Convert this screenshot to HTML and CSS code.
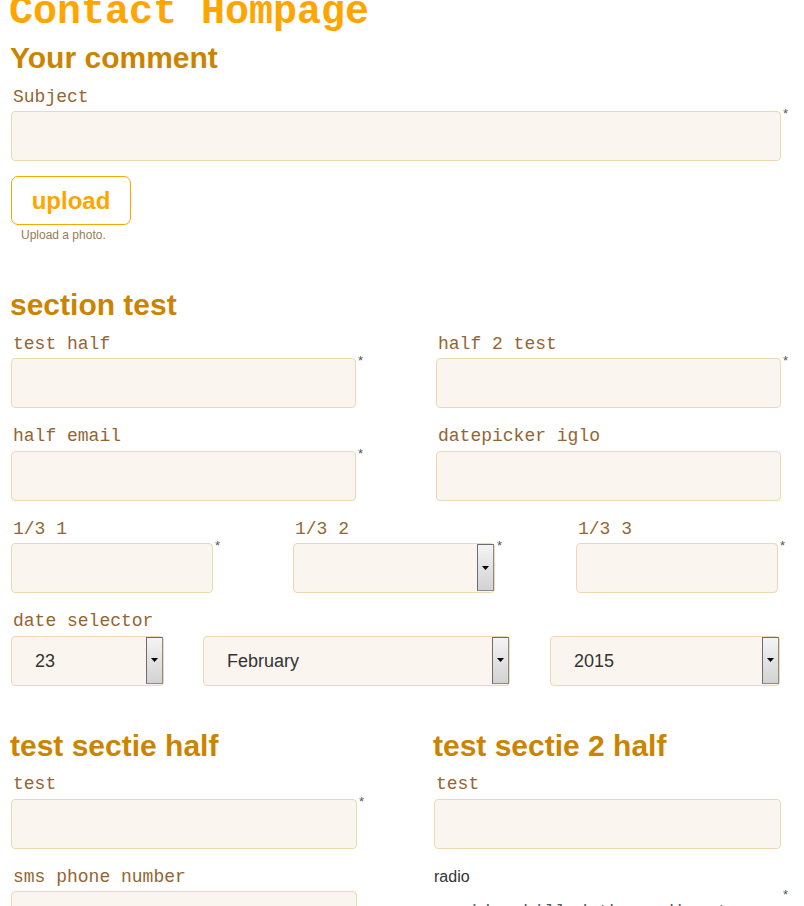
FILE: index.html
```html
<!DOCTYPE html>
<html lang="nl">
<head>
<meta charset="utf-8">
<title>Contact Hompage</title>
<link rel="stylesheet" href="styles.css">
</head>
<body>
<div class="page">
  <h1 class="title">Contact Hompage</h1>

  <section class="sec sec-first">
    <h2 class="sec-title">Your comment</h2>
    <div class="field field-tight">
      <label class="lbl">Subject</label>
      <div class="ctl"><input class="inp w-full" type="text"><span class="req">*</span></div>
    </div>
    <div class="upload">
      <button class="upload-btn" type="button">upload</button>
      <div class="hint">Upload a photo.</div>
    </div>
  </section>

  <section class="sec sec-second">
    <h2 class="sec-title">section test</h2>
    <div class="grid-half">
      <div class="field">
        <label class="lbl">test half</label>
        <div class="ctl"><input class="inp w-half" type="text"><span class="req">*</span></div>
      </div>
      <div class="field">
        <label class="lbl">half 2 test</label>
        <div class="ctl"><input class="inp w-half" type="text"><span class="req">*</span></div>
      </div>
      <div class="field">
        <label class="lbl">half email</label>
        <div class="ctl"><input class="inp w-half" type="text"><span class="req">*</span></div>
      </div>
      <div class="field">
        <label class="lbl">datepicker iglo</label>
        <div class="ctl"><input class="inp w-half" type="text"></div>
      </div>
    </div>
    <div class="grid-third">
      <div class="field">
        <label class="lbl">1/3 1</label>
        <div class="ctl"><input class="inp w-third" type="text"><span class="req">*</span></div>
      </div>
      <div class="field">
        <label class="lbl">1/3 2</label>
        <div class="ctl">
          <div class="select w-third"><span class="sel-val"></span><span class="sel-btn"><svg width="7" height="4" viewBox="0 0 7 4"><polygon points="0,0 7,0 3.5,4" fill="#000"/></svg></span></div>
          <span class="req">*</span>
        </div>
      </div>
      <div class="field">
        <label class="lbl">1/3 3</label>
        <div class="ctl"><input class="inp w-third" type="text"><span class="req">*</span></div>
      </div>
    </div>
    <div class="field">
      <label class="lbl">date selector</label>
      <div class="date-row">
        <div class="select w-day"><span class="sel-val">23</span><span class="sel-btn"><svg width="7" height="4" viewBox="0 0 7 4"><polygon points="0,0 7,0 3.5,4" fill="#000"/></svg></span></div>
        <div class="select w-month"><span class="sel-val">February</span><span class="sel-btn"><svg width="7" height="4" viewBox="0 0 7 4"><polygon points="0,0 7,0 3.5,4" fill="#000"/></svg></span></div>
        <div class="select w-year"><span class="sel-val">2015</span><span class="sel-btn"><svg width="7" height="4" viewBox="0 0 7 4"><polygon points="0,0 7,0 3.5,4" fill="#000"/></svg></span></div>
      </div>
    </div>
  </section>

  <section class="cols">
    <div class="col col-left">
      <h2 class="sec-title">test sectie half</h2>
      <div class="field">
        <label class="lbl">test</label>
        <div class="ctl"><input class="inp w-col" type="text"><span class="req">*</span></div>
      </div>
      <div class="field">
        <label class="lbl">sms phone number</label>
        <div class="ctl"><input class="inp w-col" type="text"></div>
      </div>
    </div>
    <div class="col col-right">
      <h2 class="sec-title">test sectie 2 half</h2>
      <div class="field">
        <label class="lbl">test</label>
        <div class="ctl"><input class="inp w-col2" type="text"></div>
      </div>
      <div class="field">
        <div class="radio-lbl">radio</div>
        <div class="ctl">
          <div class="radio-opts w-col2">
            <label class="opt"><span class="dot"></span><span class="opt-txt">video killed the radio star</span></label>
          </div>
          <span class="req req-radio">*</span>
        </div>
      </div>
    </div>
  </section>
</div>
</body>
</html>
```

FILE: styles.css
```css
* { box-sizing: border-box; }
html, body { overflow: hidden; }
body {
  margin: 0;
  background: #ffffff;
  font-family: "Liberation Sans", Arial, sans-serif;
}
.page {
  display: flex;
  flex-direction: column;
  padding-left: 11px;
}
.title {
  margin: -7px 0 0 -2px;
  font: bold 40px/40px "Liberation Mono", "Courier New", monospace;
  color: #ffa500;
}
.sec {
  display: flex;
  flex-direction: column;
}
.sec-first { margin-top: 8.1px; }
.sec-second { margin-top: 46.4px; }
.sec-title {
  margin: 0 0 11.5px -1px;
  font: bold 30px/34px "Liberation Sans", Arial, sans-serif;
  color: #cc8400;
}
.field {
  display: flex;
  flex-direction: column;
  margin-bottom: 18px;
}
.field-tight { margin-bottom: 15px; }
.lbl {
  display: block;
  height: 20px;
  margin-bottom: 4.5px;
  padding-left: 2px;
  font: 18px/20px "Liberation Mono", "Courier New", monospace;
  color: #946532;
}
.ctl {
  display: flex;
  align-items: flex-start;
}
.inp {
  display: block;
  height: 50px;
  margin: 0;
  border: 1px solid #ecd9b2;
  border-radius: 4px;
  background: #faf6ef;
  font: 18px "Liberation Sans", Arial, sans-serif;
  color: #333;
  outline: none;
}
.w-full { width: 770px; }
.w-half { width: 345px; }
.w-third { width: 202px; }
.w-col { width: 346px; }
.w-col2 { width: 347px; }
.w-day { width: 153px; }
.w-month { width: 307px; }
.w-year { width: 230px; }
.req {
  margin: -4px 0 0 2px;
  font: 13px/13px "Liberation Sans", Arial, sans-serif;
  color: #555;
}
.req-radio { margin-top: 1px; }

.upload {
  display: flex;
  flex-direction: column;
  align-items: flex-start;
}
.upload-btn {
  width: 120px;
  height: 49px;
  margin: 0;
  padding: 0;
  border: 1px solid #ffa500;
  border-radius: 7px;
  background: #ffffff;
  font: bold 24px "Liberation Sans", Arial, sans-serif;
  color: #ffa500;
  cursor: pointer;
}
.hint {
  margin: 3px 0 0 10px;
  font: 12px/14px "Liberation Sans", Arial, sans-serif;
  color: #9c7a55;
}

.grid-half {
  display: grid;
  grid-template-columns: 425px 1fr;
}
.grid-third {
  display: grid;
  grid-template-columns: 282px 283px 1fr;
}
.date-row {
  display: flex;
  gap: 39px;
}
.date-row .w-year { margin-left: 1px; }

.select {
  display: flex;
  align-items: flex-start;
  height: 50px;
  border: 1px solid #ecd9b2;
  border-radius: 4px;
  background: #faf6ef;
}
.sel-val {
  align-self: center;
  padding-left: 23px;
  font: 18px/20px "Liberation Sans", Arial, sans-serif;
  color: #333;
}
.sel-btn {
  display: flex;
  align-items: center;
  justify-content: center;
  margin-left: auto;
  width: 17px;
  height: 47px;
  border: 1px solid #6c6c6c;
  border-right-color: #8a8a8a;
  border-bottom-color: #8a8a8a;
  background: linear-gradient(#f4f4f4, #d2d2d2);
}

.cols {
  display: flex;
  margin-top: 25px;
}
.col {
  display: flex;
  flex-direction: column;
}
.col-left { width: 423px; }
.col-right { flex: 1; }

.radio-lbl {
  height: 20px;
  font: 16px/20px "Liberation Sans", Arial, sans-serif;
  color: #333;
}
.radio-opts {
  padding-top: 15px;
}
.opt {
  display: flex;
  align-items: center;
  gap: 9px;
  padding-left: 3px;
  font: 18px/20px "Liberation Mono", "Courier New", monospace;
  color: #555;
}
.dot {
  width: 12px;
  height: 12px;
  border: 1px solid #9a9a9a;
  border-radius: 50%;
  background: radial-gradient(circle, #ffffff 30%, #e6e6e6 100%);
}
```
